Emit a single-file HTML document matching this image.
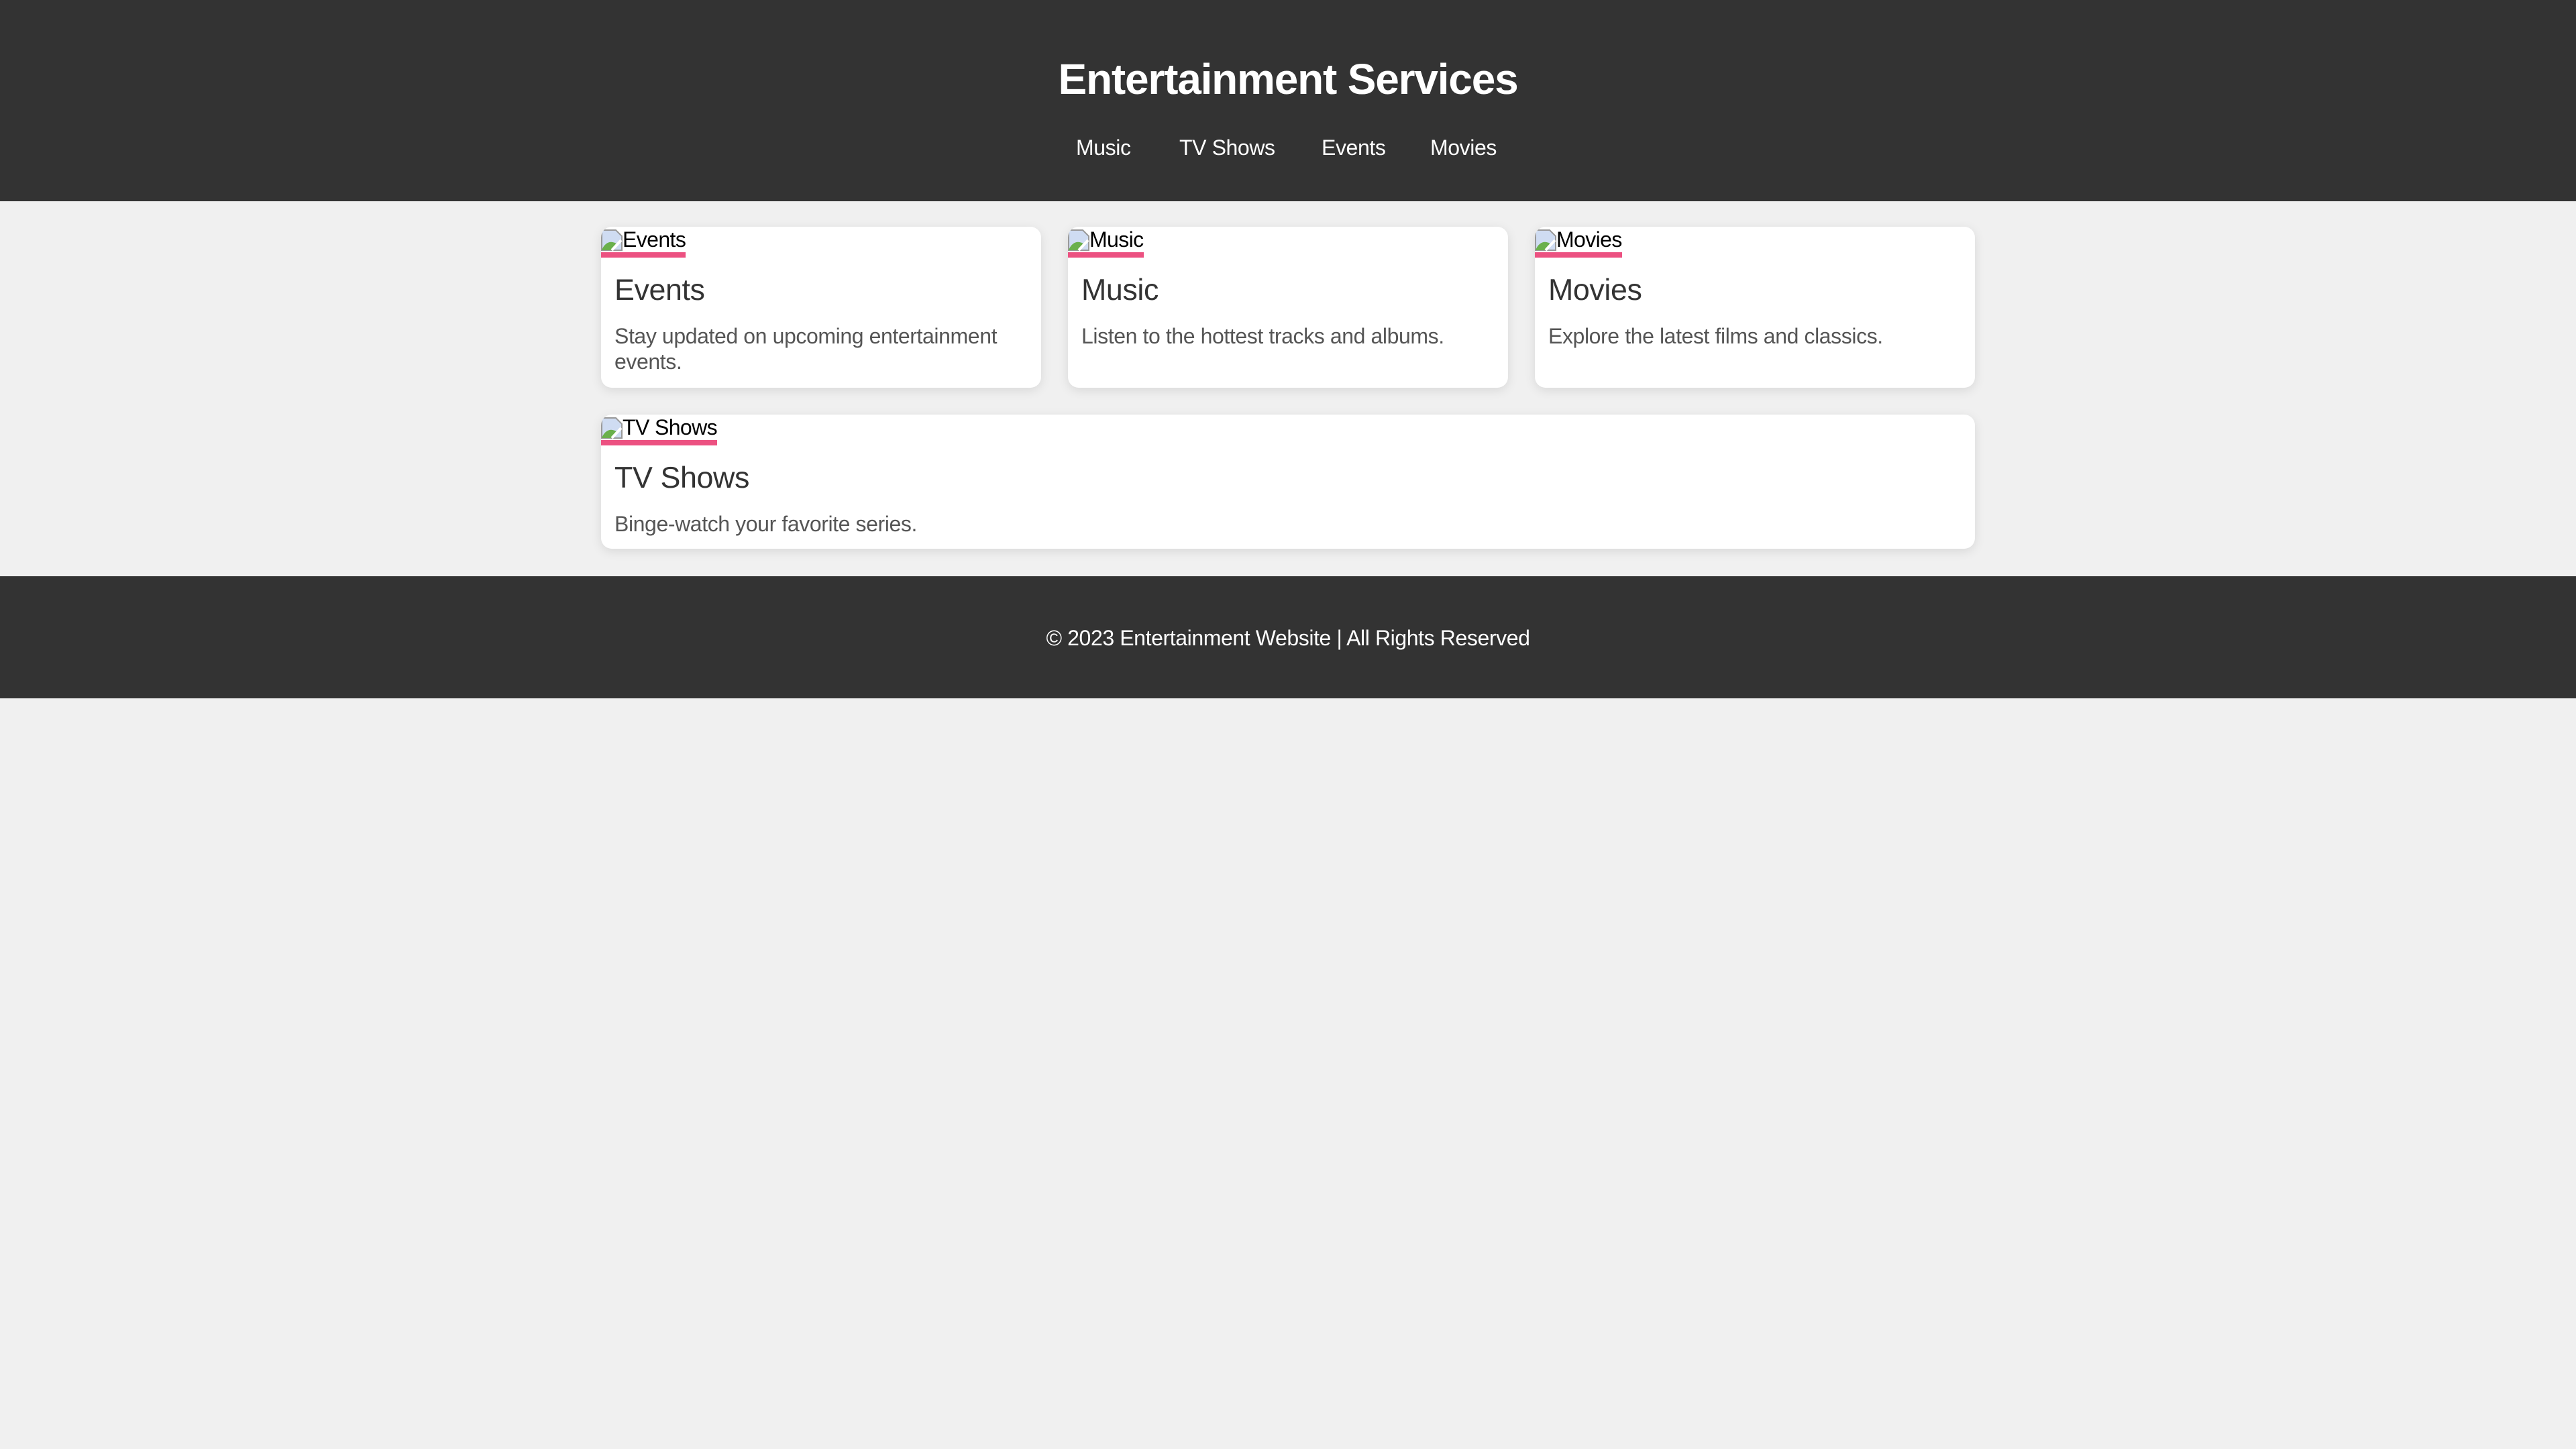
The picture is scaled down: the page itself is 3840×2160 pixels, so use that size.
<!DOCTYPE html>
<html><head><meta charset="utf-8"><style>
html{zoom:2}
*{box-sizing:border-box}
body{margin:0;width:1920px;height:1080px;background:#f0f0f0;font-family:"Liberation Sans",sans-serif;overflow:hidden}
header{background:#333;height:150px;position:relative;color:#fff}
header h1{position:absolute;left:0;right:0;top:39px;margin:0;text-align:center;font-size:32px;line-height:40px;font-weight:bold;letter-spacing:-0.6px}
header .n{position:absolute;top:100px;font-size:16px;line-height:20px;letter-spacing:-0.2px}
.wrap{position:absolute;top:169px;left:448px;width:1024px}
.grid{display:grid;grid-template-columns:repeat(3,1fr);gap:20px}
.card{background:#fff;border-radius:8px;box-shadow:0 2px 8px rgba(0,0,0,.1);overflow:hidden;height:120px}
.card.w{grid-column:1/4;height:100px}
.img{display:inline-block;border-bottom:4px solid #ec5181;height:23px;font-size:16px;line-height:19px;color:#000;white-space:nowrap;letter-spacing:-0.3px}
.img svg{vertical-align:-3px}
.c{padding:0 10px}
.c h3{margin:11px 0 0;font-size:22.4px;line-height:26px;font-weight:normal;color:#333;letter-spacing:-0.2px}
.c p{margin:12px 0 0;font-size:16px;line-height:19px;color:#555;letter-spacing:-0.2px}
footer{position:absolute;top:429.5px;left:0;width:1920px;height:91px;background:#333;color:#fff;text-align:center;font-size:16px;line-height:20px;padding-top:36px;letter-spacing:-0.2px}
</style></head><body>
<header>
<h1>Entertainment Services</h1>
<span class="n" style="left:802px">Music</span>
<span class="n" style="left:879px">TV Shows</span>
<span class="n" style="left:985px">Events</span>
<span class="n" style="left:1066px">Movies</span>
</header>
<div class="wrap"><div class="grid">
<div class="card"><span class="img"><svg width="16" height="16" viewBox="0 0 16 16"><path d="M0.5 0.5H11L15.5 5V15.5H0.5Z" fill="#cfdcf2" stroke="#999"/><path d="M0.5 15.5 C3 9 8 8 12 11 L8 15.5Z" fill="#6ab04c"/><path d="M8 15.5L15 8" stroke="#fff" stroke-width="2"/></svg>Events</span><div class="c"><h3>Events</h3><p>Stay updated on upcoming entertainment events.</p></div></div>
<div class="card"><span class="img"><svg width="16" height="16" viewBox="0 0 16 16"><path d="M0.5 0.5H11L15.5 5V15.5H0.5Z" fill="#cfdcf2" stroke="#999"/><path d="M0.5 15.5 C3 9 8 8 12 11 L8 15.5Z" fill="#6ab04c"/><path d="M8 15.5L15 8" stroke="#fff" stroke-width="2"/></svg>Music</span><div class="c"><h3>Music</h3><p>Listen to the hottest tracks and albums.</p></div></div>
<div class="card"><span class="img"><svg width="16" height="16" viewBox="0 0 16 16"><path d="M0.5 0.5H11L15.5 5V15.5H0.5Z" fill="#cfdcf2" stroke="#999"/><path d="M0.5 15.5 C3 9 8 8 12 11 L8 15.5Z" fill="#6ab04c"/><path d="M8 15.5L15 8" stroke="#fff" stroke-width="2"/></svg>Movies</span><div class="c"><h3>Movies</h3><p>Explore the latest films and classics.</p></div></div>
<div class="card w"><span class="img"><svg width="16" height="16" viewBox="0 0 16 16"><path d="M0.5 0.5H11L15.5 5V15.5H0.5Z" fill="#cfdcf2" stroke="#999"/><path d="M0.5 15.5 C3 9 8 8 12 11 L8 15.5Z" fill="#6ab04c"/><path d="M8 15.5L15 8" stroke="#fff" stroke-width="2"/></svg>TV Shows</span><div class="c"><h3>TV Shows</h3><p>Binge-watch your favorite series.</p></div></div>
</div></div>
<footer>© 2023 Entertainment Website | All Rights Reserved</footer>
</body></html>
